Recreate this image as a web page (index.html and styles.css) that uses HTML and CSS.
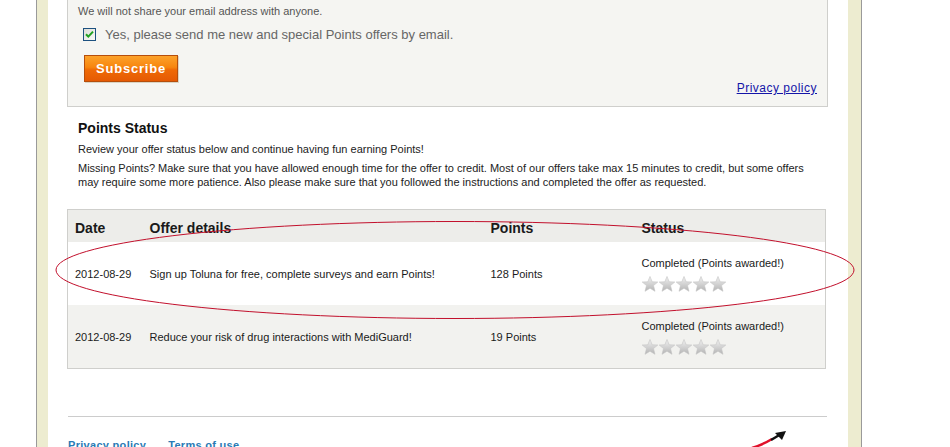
FILE: index.html
```html
<!DOCTYPE html>
<html>
<head>
<meta charset="utf-8">
<link rel="stylesheet" href="styles.css">
</head>
<body>
<div class="page">
  <div class="frame">
    <div class="content">
      <div class="subscribe-box">
        <p class="note">We will not share your email address with anyone.</p>
        <label class="optin">
          <svg class="check" width="13" height="13" viewBox="0 0 13 13">
            <defs><linearGradient id="cb" x1="0" y1="0" x2="1" y2="1"><stop offset="0" stop-color="#dcdcd6"/><stop offset="1" stop-color="#fbfbf9"/></linearGradient></defs>
            <rect x="0.5" y="0.5" width="12" height="12" fill="url(#cb)" stroke="#1c5180"/>
            <path d="M3 6.2 L5.3 8.6 L10 3.6" fill="none" stroke="#21a121" stroke-width="2"/>
          </svg>
          <span>Yes, please send me new and special Points offers by email.</span>
        </label>
        <div class="actions">
          <button class="btn-subscribe">Subscribe</button>
          <a class="privacy" href="#">Privacy policy</a>
        </div>
      </div>

      <h2 class="section-title">Points Status</h2>
      <p class="intro">Review your offer status below and continue having fun earning Points!</p>
      <p class="intro">Missing Points? Make sure that you have allowed enough time for the offer to credit. Most of our offers take max 15 minutes to credit, but some offers may require some more patience. Also please make sure that you followed the instructions and completed the offer as requested.</p>

      <table class="status-table">
        <colgroup><col class="c-date"><col class="c-offer"><col class="c-points"><col class="c-status"></colgroup>
        <thead>
          <tr><th>Date</th><th>Offer details</th><th>Points</th><th>Status</th></tr>
        </thead>
        <tbody>
          <tr>
            <td>2012-08-29</td>
            <td>Sign up Toluna for free, complete surveys and earn Points!</td>
            <td>128 Points</td>
            <td>
              <div class="status-text">Completed (Points awarded!)</div>
              <svg class="stars" width="86" height="16" viewBox="0 0 86 16">
                <defs><linearGradient id="sg1" x1="0" y1="0" x2="0" y2="1"><stop offset="0" stop-color="#f2f2f2"/><stop offset="1" stop-color="#b4b4b4"/></linearGradient></defs>
                <g fill="url(#sg1)" stroke="#c4c4c4" stroke-width="0.6">
                  <polygon points="8,0.5 10.2,5.8 15.8,6 11.5,9.6 13,15.3 8,12.2 3,15.3 4.5,9.6 0.2,6 5.8,5.8"/>
                  <polygon transform="translate(17 0)" points="8,0.5 10.2,5.8 15.8,6 11.5,9.6 13,15.3 8,12.2 3,15.3 4.5,9.6 0.2,6 5.8,5.8"/>
                  <polygon transform="translate(34 0)" points="8,0.5 10.2,5.8 15.8,6 11.5,9.6 13,15.3 8,12.2 3,15.3 4.5,9.6 0.2,6 5.8,5.8"/>
                  <polygon transform="translate(51 0)" points="8,0.5 10.2,5.8 15.8,6 11.5,9.6 13,15.3 8,12.2 3,15.3 4.5,9.6 0.2,6 5.8,5.8"/>
                  <polygon transform="translate(68 0)" points="8,0.5 10.2,5.8 15.8,6 11.5,9.6 13,15.3 8,12.2 3,15.3 4.5,9.6 0.2,6 5.8,5.8"/>
                </g>
              </svg>
            </td>
          </tr>
          <tr class="alt">
            <td>2012-08-29</td>
            <td>Reduce your risk of drug interactions with MediGuard!</td>
            <td>19 Points</td>
            <td>
              <div class="status-text">Completed (Points awarded!)</div>
              <svg class="stars" width="86" height="16" viewBox="0 0 86 16">
                <g fill="url(#sg1)" stroke="#c4c4c4" stroke-width="0.6">
                  <polygon points="8,0.5 10.2,5.8 15.8,6 11.5,9.6 13,15.3 8,12.2 3,15.3 4.5,9.6 0.2,6 5.8,5.8"/>
                  <polygon transform="translate(17 0)" points="8,0.5 10.2,5.8 15.8,6 11.5,9.6 13,15.3 8,12.2 3,15.3 4.5,9.6 0.2,6 5.8,5.8"/>
                  <polygon transform="translate(34 0)" points="8,0.5 10.2,5.8 15.8,6 11.5,9.6 13,15.3 8,12.2 3,15.3 4.5,9.6 0.2,6 5.8,5.8"/>
                  <polygon transform="translate(51 0)" points="8,0.5 10.2,5.8 15.8,6 11.5,9.6 13,15.3 8,12.2 3,15.3 4.5,9.6 0.2,6 5.8,5.8"/>
                  <polygon transform="translate(68 0)" points="8,0.5 10.2,5.8 15.8,6 11.5,9.6 13,15.3 8,12.2 3,15.3 4.5,9.6 0.2,6 5.8,5.8"/>
                </g>
              </svg>
            </td>
          </tr>
        </tbody>
      </table>

      <div class="footer">
        <a href="#">Privacy policy</a>
        <a href="#">Terms of use</a>
      </div>
    </div>
  </div>
</div>

<svg class="annotation" width="950" height="447" viewBox="0 0 950 447">
  <ellipse cx="455" cy="270" rx="399" ry="48.5" fill="none" stroke="#c2102c" stroke-width="1"/>
  <path d="M752 448 Q764 444 772 439" fill="none" stroke="#e0102a" stroke-width="2.5"/>
  <path d="M771 440 L781 434" fill="none" stroke="#111" stroke-width="2.5"/>
  <polygon points="786,431 775,433 782,440" fill="#111"/>
</svg>
</body>
</html>
```

FILE: styles.css
```css
html, body {
  margin: 0;
  padding: 0;
  background: #ffffff;
}

body {
  position: relative;
  height: 447px;
  overflow: hidden;
  font-family: "Liberation Sans", Arial, sans-serif;
  font-size: 11px;
  color: #222;
}

.page {
  display: flex;
  padding-left: 36px;
}

.frame {
  width: 800px;
  border-left: 1px solid #9a9a9a;
  border-right: 1px solid #9a9a9a;
  box-shadow: inset 11px 0 0 #edecd0, inset -13px 0 0 #edecd0;
  padding: 0 13px 0 11px;
  height: 447px;
}

.content {
  padding: 0 20px 0 19px;
}

.subscribe-box {
  background: #f5f5f2;
  border: 1px solid #cfcfcc;
  border-top: none;
  padding: 4px 10px 11px 10px;
}

.note {
  margin: 0;
  line-height: 14px;
  color: #555;
}

.optin {
  display: flex;
  align-items: center;
  gap: 9px;
  margin: 9px 0 0 5px;
  height: 15px;
  font-size: 13px;
  color: #666;
}

.check {
  display: block;
  flex: none;
}

.actions {
  display: flex;
  justify-content: space-between;
  align-items: flex-start;
  margin-top: 13px;
  padding-left: 6px;
}

.btn-subscribe {
  width: 94px;
  height: 27px;
  border: 1px solid #b64e0c;
  background: linear-gradient(#fca22a 0%, #f7860f 45%, #ef6a06 55%, #e55a04 100%);
  color: #fff;
  font-family: "Liberation Sans", Arial, sans-serif;
  font-weight: bold;
  font-size: 13px;
  letter-spacing: 0.8px;
  padding: 0;
  box-shadow: 1px 1px 0 #d9d4c4;
}

.privacy {
  margin-top: 26px;
  line-height: 14px;
  font-size: 12px;
  letter-spacing: 0.5px;
  color: #1414a8;
  text-decoration: underline;
}

.section-title {
  margin: 12px 0 0 11px;
  font-size: 14px;
  line-height: 18px;
  font-weight: bold;
  color: #111;
}

.intro {
  margin: 5px 0 0 11px;
  max-width: 728px;
  line-height: 14px;
  color: #222;
}

.status-table {
  margin-top: 20px;
  width: 758px;
  border-collapse: collapse;
  table-layout: fixed;
  border: 1px solid #cfcfcc;
}

.c-date { width: 75px; }
.c-offer { width: 341px; }
.c-points { width: 151px; }
.c-status { width: 191px; }

.status-table th {
  background: #ededea;
  height: 29px;
  padding: 3px 0 0 7px;
  text-align: left;
  font-size: 14px;
  font-weight: bold;
  color: #1a1a1a;
  vertical-align: middle;
}

.status-table td {
  height: 63px;
  padding: 0 0 0 7px;
  vertical-align: middle;
  background: #fff;
  color: #1a1a1a;
}

.status-table tr.alt td {
  background: #f2f2ef;
}

.status-text {
  line-height: 14px;
}

.stars {
  display: block;
  margin-top: 6px;
}

.footer {
  margin-top: 47px;
  border-top: 1px solid #cccccc;
  padding-top: 21px;
  margin-left: 1px;
  width: 759px;
  display: flex;
  gap: 22px;
}

.footer a {
  font-size: 11px;
  font-weight: bold;
  color: #2a7bb5;
  text-decoration: none;
  line-height: 14px;
  letter-spacing: 0.3px;
}

.annotation {
  position: absolute;
  left: 0;
  top: 0;
  pointer-events: none;
}
```
